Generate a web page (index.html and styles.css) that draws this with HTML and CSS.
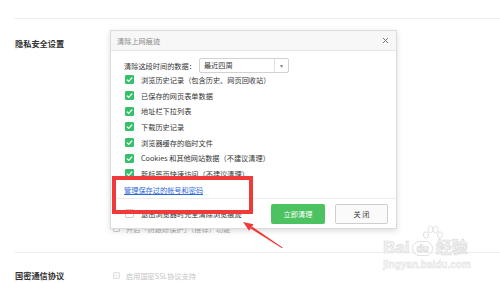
FILE: index.html
```html
<!DOCTYPE html>
<html lang="zh-CN">
  <head>
    <meta charset="UTF-8" />
    <meta name="viewport" content="width=device-width, initial-scale=1.0" />
    <title>清除上网痕迹</title>
    <link rel="stylesheet" href="styles.css">
  </head>
  <body>
    <div class="page">
      <section class="section section-privacy">
        <div class="section-label">隐私安全设置</div>
        <ul class="options">
          <li class="option faded"><span class="box"></span>开启「防跟踪保护」（推荐）功能</li>
        </ul>
      </section>
      <section class="section section-gm">
        <div class="section-label">国密通信协议</div>
        <ul class="options">
          <li class="option disabled"><span class="box"></span>启用国密SSL协议支持</li>
        </ul>
      </section>

      <div class="watermark">
        <svg class="paw" width="22" height="16" viewBox="0 0 22 16">
          <ellipse cx="4" cy="10" rx="2.6" ry="3.2" />
          <ellipse cx="8.5" cy="4.5" rx="2.6" ry="3.2" />
          <ellipse cx="13.5" cy="4.5" rx="2.6" ry="3.2" />
          <ellipse cx="18" cy="10" rx="2.6" ry="3.2" />
        </svg>
        <div class="wm-logo">Bai<span class="wm-du">du</span><span class="wm-cn">经验</span></div>
        <div class="wm-url">jingyan.baidu.com</div>
      </div>

      <div class="dialog">
        <div class="dialog-header">
          <span class="dialog-title">清除上网痕迹</span>
          <svg class="dialog-close" width="7" height="7" viewBox="0 0 7 7">
            <path d="M1 1L6 6M6 1L1 6" />
          </svg>
        </div>
        <div class="dialog-body">
          <div class="range-row">
            <span>清除这段时间的数据：</span>
            <div class="select">
              <span class="select-value">最近四周</span>
              <span class="select-arrow">▾</span>
            </div>
          </div>
          <ul class="checks">
            <li class="check"><span class="box on"></span>浏览历史记录（包含历史、网页回收站）</li>
            <li class="check"><span class="box on"></span>已保存的网页表单数据</li>
            <li class="check"><span class="box on"></span>地址栏下拉列表</li>
            <li class="check"><span class="box on"></span>下载历史记录</li>
            <li class="check"><span class="box on"></span>浏览器缓存的临时文件</li>
            <li class="check"><span class="box on"></span>Cookies 和其他网站数据（不建议清理）</li>
            <li class="check"><span class="box on"></span>新标签页快速访问（不建议清理）</li>
          </ul>
          <a class="manage-link" href="#">管理保存过的帐号和密码</a>
        </div>
        <div class="dialog-footer">
          <label class="check footer-check"><span class="box"></span>退出浏览器时完全清除浏览痕迹</label>
          <button class="btn btn-primary">立即清理</button>
          <button class="btn btn-default">关 闭</button>
        </div>
      </div>

      <div class="mark-box"></div>
      <svg class="mark-arrow" width="500" height="283" viewBox="0 0 500 283">
        <polygon points="243,222 253.5,224.2 249.1,230.8" />
        <polygon points="250.6,228.6 252,226.5 282.6,247.4 282,248.3" />
      </svg>
    </div>
  </body>
</html>
```

FILE: styles.css
```css
:root {
  --text: #363636;
  --muted: #8a8a8a;
  --line: #efefef;
  --green: #35c16a;
  --red: #f03a3a;
  --link: #2f6bd8;
}
html,
body {
  margin: 0;
  overflow: hidden;
}
body {
  font-family: "Noto Sans CJK SC", "Noto Sans", sans-serif;
  background: white;
  color: var(--text);
  font-size: 7.2px;
}
ul {
  list-style: none;
  margin: 0;
  padding: 0;
}
.page {
  position: relative;
  width: 500px;
  height: 283px;
  padding-top: 18px;
  box-sizing: border-box;
}
.section {
  display: flex;
  margin-left: 14px;
  border-top: 1px solid var(--line);
}
.section-label {
  width: 98px;
  padding-left: 1px;
  font-size: 8.2px;
  font-weight: 600;
  color: #333;
  line-height: 23px;
}
.section-privacy {
  height: 234px;
  box-sizing: border-box;
  padding-top: 13px;
}
.section-privacy .options {
  padding-top: 186px;
}
.section-gm {
  padding-top: 12px;
}
.section-gm .section-label {
  line-height: 21px;
}
.option {
  display: flex;
  align-items: center;
  height: 21px;
  color: #aaa;
}
.option .box {
  width: 7px;
  height: 7px;
  margin-right: 6px;
}
.option.disabled {
  color: #c4c4c4;
}
.option.disabled .box {
  border-color: #e2e2e2;
  background: #f7f7f7;
}
.box {
  display: inline-block;
  box-sizing: border-box;
  width: 9px;
  height: 9px;
  border: 1px solid #cfcfcf;
  border-radius: 1px;
  background: white;
  flex: none;
}
.box.on {
  border-color: var(--green);
  background: var(--green) url("data:image/svg+xml,%3Csvg xmlns='http://www.w3.org/2000/svg' viewBox='0 0 9 9'%3E%3Cpath d='M1.8 4.6L3.7 6.4L7.2 2.6' fill='none' stroke='white' stroke-width='1.3'/%3E%3C/svg%3E") center / 9px 9px no-repeat;
}

/* watermark */
.watermark {
  position: absolute;
  left: 383px;
  top: 225px;
  white-space: nowrap;
  color: #f5f5f5;
}
.paw {
  display: block;
  margin: 0 0 -5px 39px;
  fill: none;
  stroke: #e2e2e2;
  stroke-width: 1;
}
.wm-logo {
  font-family: "Liberation Sans", sans-serif;
  font-size: 17px;
  font-weight: bold;
  line-height: 20px;
  -webkit-text-stroke: 0.7px #dcdcdc;
}
.wm-du {
  display: inline-block;
  font-size: 10px;
  line-height: 13px;
  padding: 0 3px;
  border: 1.5px solid #e0e0e0;
  border-radius: 8px;
  margin: 0 3px;
  vertical-align: 1px;
}
.wm-cn {
  font-family: "Noto Sans CJK SC", sans-serif;
  font-size: 16px;
}
.wm-url {
  font-family: "Liberation Sans", sans-serif;
  font-size: 10px;
  font-weight: bold;
  line-height: 14px;
  -webkit-text-stroke: 0.4px #dedede;
}

/* dialog */
.dialog {
  position: absolute;
  left: 110px;
  top: 30px;
  width: 287px;
  height: 199px;
  box-sizing: border-box;
  background: white;
  border: 1px solid #dcdcdc;
  box-shadow: 0 2px 6px rgba(0, 0, 0, 0.14);
  display: flex;
  flex-direction: column;
}
.dialog-header {
  display: flex;
  align-items: center;
  justify-content: space-between;
  height: 19px;
  padding: 0 7px 0 6px;
  background: #f7f7f7;
  border-bottom: 1px solid #e6e6e6;
}
.dialog-title {
  color: var(--muted);
}
.dialog-close {
  fill: none;
  stroke: #777;
  stroke-width: 1;
}
.dialog-body {
  flex: 1;
  padding: 7px 0 0 13px;
}
.range-row {
  display: flex;
  align-items: center;
  height: 15px;
}
.select {
  display: flex;
  align-items: stretch;
  box-sizing: border-box;
  width: 90px;
  height: 15px;
  margin-left: 3px;
  border: 1px solid #d2d2d2;
  border-radius: 2px;
}
.select-value {
  flex: 1;
  padding-left: 4px;
  line-height: 13px;
}
.select-arrow {
  width: 13px;
  border-left: 1px solid #e2e2e2;
  color: #888;
  font-size: 6px;
  line-height: 13px;
  text-align: center;
}
.checks {
  margin-top: -1px;
}
.check {
  display: flex;
  align-items: center;
  height: 15.7px;
}
.check .box {
  margin: 0 7px 0 1px;
}
.manage-link {
  display: block;
  margin-top: 1px;
  line-height: 15px;
  color: var(--link);
}
.dialog-footer {
  display: flex;
  align-items: center;
  height: 29px;
  padding: 0 8px 0 13px;
  border-top: 1px solid #ececec;
}
.footer-check {
  flex: 1;
}
.btn {
  box-sizing: border-box;
  height: 20px;
  margin-top: 1px;
  border-radius: 2px;
  font-family: inherit;
  font-size: 7.2px;
  padding: 0;
}
.btn-primary {
  width: 54px;
  border: none;
  background: #4cc260;
  color: white;
}
.btn-default {
  width: 53px;
  margin-left: 10px;
  border: 1px solid #cfcfcf;
  background: #fafafa;
  color: #333;
}

/* annotation */
.mark-box {
  position: absolute;
  left: 112px;
  top: 176px;
  width: 141px;
  height: 38px;
  box-sizing: border-box;
  border: 4px solid var(--red);
}
.mark-arrow {
  position: absolute;
  left: 0;
  top: 0;
  fill: var(--red);
  pointer-events: none;
}
```
